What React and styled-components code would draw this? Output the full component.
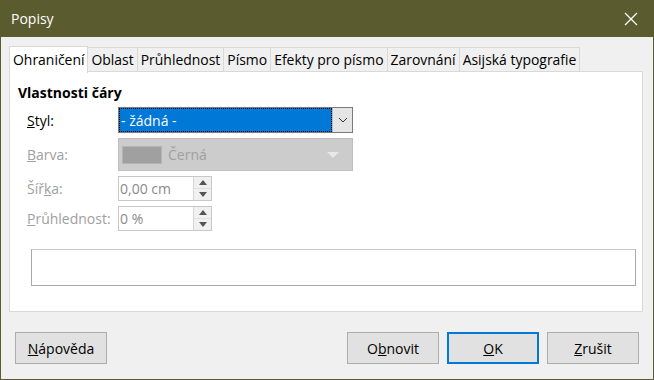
import React from 'react'
import styled, { createGlobalStyle } from 'styled-components'

const GlobalStyle = createGlobalStyle`
    html, body {
        margin: 0;
        padding: 0;
        background: #f0f0f0;
    }
    body {
        font-family: "Open Sans", "Noto Sans", sans-serif;
        font-size: 14px;
        color: #000;
    }
`

const tabs = ['Ohraničení', 'Oblast', 'Průhlednost', 'Písmo', 'Efekty pro písmo', 'Zarovnání', 'Asijská typografie']

const App = () => {
    return (
        <Window>
            <GlobalStyle />
            <TitleBar>
                <Title>Popisy</Title>
                <CloseIcon width="14" height="14" viewBox="0 0 14 14">
                    <path d="M1 1 L13 13 M13 1 L1 13" stroke="#fff" strokeWidth="1.3" />
                </CloseIcon>
            </TitleBar>
            <Body>
                <TabStrip>
                    {tabs.map((t, i) => (
                        <Tab key={t} active={i === 0}>{t}</Tab>
                    ))}
                </TabStrip>
                <Panel>
                    <Heading>Vlastnosti čáry</Heading>
                    <Form>
                        <Label><u>S</u>tyl:</Label>
                        <Combo>
                            <ComboValue>- žádná -</ComboValue>
                            <ComboButton>
                                <svg width="10" height="6" viewBox="0 0 10 6">
                                    <path d="M1 1 L5 5 L9 1" fill="none" stroke="#333" strokeWidth="1" />
                                </svg>
                            </ComboButton>
                        </Combo>

                        <Label disabled><u>B</u>arva:</Label>
                        <ColorBox>
                            <Swatch />
                            <ColorName>Černá</ColorName>
                            <svg width="14" height="8" viewBox="0 0 14 8">
                                <path d="M1 1 L13 1 L7 7 Z" fill="#e8e8e8" />
                            </svg>
                        </ColorBox>

                        <Label disabled>Šíř<u>k</u>a:</Label>
                        <Spin>
                            <SpinValue>0,00 cm</SpinValue>
                            <SpinButtons>
                                <SpinBtn>
                                    <svg width="8" height="5" viewBox="0 0 8 5"><path d="M0 5 L4 0 L8 5 Z" fill="#555" /></svg>
                                </SpinBtn>
                                <SpinBtn>
                                    <svg width="8" height="5" viewBox="0 0 8 5"><path d="M0 0 L8 0 L4 5 Z" fill="#555" /></svg>
                                </SpinBtn>
                            </SpinButtons>
                        </Spin>

                        <Label disabled><u>P</u>růhlednost:</Label>
                        <Spin>
                            <SpinValue>0 %</SpinValue>
                            <SpinButtons>
                                <SpinBtn>
                                    <svg width="8" height="5" viewBox="0 0 8 5"><path d="M0 5 L4 0 L8 5 Z" fill="#555" /></svg>
                                </SpinBtn>
                                <SpinBtn>
                                    <svg width="8" height="5" viewBox="0 0 8 5"><path d="M0 0 L8 0 L4 5 Z" fill="#555" /></svg>
                                </SpinBtn>
                            </SpinButtons>
                        </Spin>
                    </Form>
                    <Preview />
                </Panel>
                <Footer>
                    <Button><u>N</u>ápověda</Button>
                    <Spacer />
                    <Button>O<u>b</u>novit</Button>
                    <Button primary><u>O</u>K</Button>
                    <Button><u>Z</u>rušit</Button>
                </Footer>
            </Body>
        </Window>
    )
}

const Window = styled.div`
    width: 654px;
    height: 380px;
    box-sizing: border-box;
    border: 1px solid #5b5b30;
    border-top: none;
    display: flex;
    flex-direction: column;
    background: #f0f0f0;
`

const TitleBar = styled.div`
    height: 37px;
    background: #5b5b30;
    display: flex;
    align-items: center;
    justify-content: space-between;
    padding: 0 16px 0 11px;
    margin: 0 -1px;
`

const Title = styled.div`
    color: #fff;
    font-size: 14px;
`

const CloseIcon = styled.svg`
    display: block;
`

const Body = styled.div`
    flex: 1;
    display: flex;
    flex-direction: column;
    padding: 9px 10px 0 8px;
`

const TabStrip = styled.div`
    display: flex;
    align-items: flex-end;
    height: 26px;
    position: relative;
    z-index: 1;
`

const Tab = styled.div`
    box-sizing: border-box;
    height: ${p => (p.active ? '27px' : '25px')};
    margin-bottom: ${p => (p.active ? '-1px' : '0')};
    padding: 0 3px;
    margin-left: -1px;
    font-size: 13.95px;
    border: 1px solid #d9d9d9;
    border-bottom: ${p => (p.active ? 'none' : '1px solid #d9d9d9')};
    background: ${p => (p.active ? '#fff' : '#f0f0f0')};
    display: flex;
    align-items: center;
    line-height: 1;
    white-space: nowrap;
    position: relative;
    z-index: ${p => (p.active ? 2 : 1)};
    &:first-child {
        margin-left: 0;
    }
`

const Panel = styled.div`
    box-sizing: border-box;
    height: 241px;
    background: #fff;
    border: 1px solid #d9d9d9;
    margin-top: -1px;
    padding: 11px 6px 0 8px;
    display: flex;
    flex-direction: column;
`

const Heading = styled.div`
    font-weight: 700;
    line-height: 20px;
`

const Form = styled.div`
    display: grid;
    grid-template-columns: 91px 235px;
    grid-auto-rows: auto;
    row-gap: 5px;
    align-items: center;
    margin: 4px 0 0 9px;
`

const Label = styled.div`
    color: ${p => (p.disabled ? '#a0a0a0' : '#000')};
    white-space: nowrap;
`

const Combo = styled.div`
    box-sizing: border-box;
    height: 26px;
    border: 1px solid #7a7a7a;
    display: flex;
    background: #fff;
`

const ComboValue = styled.div`
    flex: 1;
    background: #0078d7;
    color: #fff;
    outline: 1px dotted #000;
    outline-offset: -1px;
    display: flex;
    align-items: center;
    padding-left: 2px;
`

const ComboButton = styled.div`
    width: 19px;
    background: #e5e5e5;
    border-left: 1px solid #bcbcbc;
    display: flex;
    align-items: center;
    justify-content: center;
`

const ColorBox = styled.div`
    box-sizing: border-box;
    height: 33px;
    background: #cccccc;
    border: 1px solid #bfbfbf;
    display: flex;
    align-items: center;
    padding: 0 12px 0 3px;
`

const Swatch = styled.div`
    width: 38px;
    height: 16px;
    background: #a0a0a0;
    border: 1px solid #b4b4b4;
`

const ColorName = styled.div`
    flex: 1;
    color: #a0a0a0;
    margin-left: 6px;
`

const Spin = styled.div`
    box-sizing: border-box;
    width: 94px;
    height: 25px;
    border: 1px solid #c8c8c8;
    background: #fff;
    display: flex;
`

const SpinValue = styled.div`
    flex: 1;
    color: #8a8a8a;
    display: flex;
    align-items: center;
    padding-left: 1px;
`

const SpinButtons = styled.div`
    width: 17px;
    display: flex;
    flex-direction: column;
    border-left: 1px solid #d6d6d6;
`

const SpinBtn = styled.div`
    flex: 1;
    background: #f0f0f0;
    display: flex;
    align-items: center;
    justify-content: center;
    & + & {
        border-top: 1px solid #e0e0e0;
    }
`

const Preview = styled.div`
    height: 35px;
    margin: 18px 0 0 13px;
    border: 1px solid #a8a8a8;
    border-top-color: #c8c8c8;
    background: #fff;
`

const Footer = styled.div`
    display: flex;
    align-items: center;
    gap: 8px;
    padding: 20px 4px 0 6px;
`

const Spacer = styled.div`
    flex: 1;
`

const Button = styled.div`
    box-sizing: border-box;
    width: 92px;
    height: 32px;
    background: #e1e1e1;
    border: ${p => (p.primary ? '2px solid #0078d7' : '1px solid #adadad')};
    display: flex;
    align-items: center;
    justify-content: center;
    white-space: nowrap;
`

export default App
